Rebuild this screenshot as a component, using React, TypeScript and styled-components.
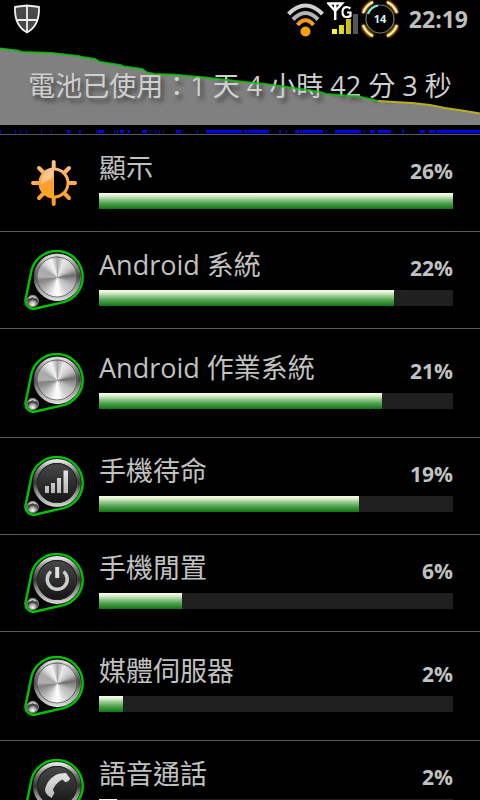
import React from "react";
import styled, { createGlobalStyle } from "styled-components";

const GlobalStyle = createGlobalStyle`
  html, body { margin: 0; background: #000; }
  body {
    color: #c1c1c1;
    font-family: "Open Sans", "Noto Sans CJK TC", sans-serif;
    overflow-x: hidden;
  }
`;

const Screen = styled.main`
  width: 100%;
  height: 100vh;
  overflow: hidden;
  background: #000;
`;

const StatusBar = styled.header`
  display: flex;
  align-items: center;
  justify-content: space-between;
  height: 38px;
  padding: 0 12px;
`;

const StatusGroup = styled.div`
  display: flex;
  align-items: center;
  gap: 2px;
`;

const Clock = styled.time`
  margin-left: 8px;
  font-size: 23px;
  line-height: 38px;
  font-weight: 700;
  color: #bebebe;
`;

const History = styled.section`
  position: relative;
  padding-bottom: 9px;
  border-bottom: 1px solid #5a5a5a;
`;

const Chart = styled.svg`
  display: block;
  width: 100%;
  height: 87px;
`;

const ChartLines = styled(Chart)`
  position: absolute;
  inset: 0 0 auto;
`;

const Activity = styled.svg`
  position: absolute;
  left: 0;
  bottom: 1px;
  width: 100%;
  height: 3px;
`;

const Duration = styled.h1`
  position: absolute;
  inset: 28px 0 auto;
  margin: 0;
  text-align: center;
  white-space: nowrap;
  font-size: 27px;
  line-height: 40px;
  font-weight: 400;
  color: #cfcfcf;
  text-shadow: 3px 4px 4px rgba(0, 0, 0, 0.5);
`;

const List = styled.ul`
  margin: 0;
  padding: 0;
  list-style: none;
`;

const Row = styled.li<{ $tall?: boolean }>`
  display: flex;
  align-items: center;
  gap: 15px;
  height: ${(p) => (p.$tall ? 108 : 96)}px;
  padding: 0 27px 0 24px;
  border-bottom: 1px solid #5a5a5a;
`;

const IconBox = styled.div`
  flex: none;
  width: 60px;
  height: 60px;
  svg { display: block; }
`;

const Details = styled.div`
  flex: 1;
  height: 64px;
`;

const Heading = styled.div`
  display: flex;
  justify-content: space-between;
  height: 42px;
`;

const Name = styled.span`
  font-size: 27px;
  line-height: 34px;
`;

const Percent = styled.span`
  font-size: 21px;
  line-height: 40px;
  font-weight: 700;
`;

const Track = styled.div`
  height: 16px;
  background: #202020;
`;

const Fill = styled.div`
  height: 100%;
  background: linear-gradient(#fbffe9 0%, #d9edc9 18%, #8cc489 42%, #4c9f4c 66%, #117611 100%);
`;

const BrushedFace = styled.div`
  width: 47px;
  height: 47px;
  border-radius: 50%;
  background: conic-gradient(
    #a8a8a8 0deg, #e8e8e8 20deg, #d8d8d8 38deg, #bbb 60deg, #6c6c6c 82deg, #8a8a8a 95deg,
    #bbb 120deg, #d0d0d0 150deg, #fff 178deg, #f2f2f2 195deg, #c4c4c4 220deg, #999 245deg,
    #808080 262deg, #b0b0b0 272deg, #a8a8a8 300deg, #e4e4e4 325deg, #f2f2f2 340deg, #a8a8a8 360deg
  );
`;

const GREEN_LINE =
  "0,48.5 17,50.5 22,52 52,53 60,54 78,56 82,57 95,59 100,62 120,65 124,66.5 142,69 147,72.5 155,74 175,74.7 205,77.5 240,81.5 265,84 290,87.5 320,92 326,94 345,95.5 357,96 378,101";
const YELLOW_LINE = "378,101 412,103 430,105 445,108 465,111 480,113.5";

const ACTIVE_SPANS = [
  [0, 1], [15, 1], [20, 1], [26, 1], [41, 1], [51, 1], [67, 3], [79, 2], [96, 1], [98, 6],
  [114, 1], [117, 1], [120, 4], [128, 2], [142, 5], [150, 1], [155, 1], [159, 1], [163, 1],
  [176, 5], [197, 1], [206, 36], [244, 3], [248, 21], [279, 2], [286, 1], [295, 4], [300, 2],
  [303, 20], [326, 1], [335, 26], [364, 1], [370, 5], [378, 13], [402, 2], [420, 5], [429, 6],
  [437, 43],
];

const Shield = () => (
  <svg width="30" height="32" viewBox="0 0 30 32" aria-label="Security">
    <path d="M15 2.5C11 3 6.5 3.5 3 4C2.5 15 5 24 15 29.5C25 24 27.5 15 27 4C23.5 3.5 19 3 15 2.5Z" fill="#484848" stroke="#eee" strokeWidth="1.8" />
    <path d="M15 3V29M4 17H26" stroke="#eee" strokeWidth="1.8" />
  </svg>
);

const Wifi = () => (
  <svg width="38" height="36" viewBox="0 0 38 36" fill="none" aria-label="Wi-Fi">
    <path d="M1.5 13Q18.500-4 35.5 13" stroke="#d0d0d0" strokeWidth="4" />
    <path d="M6 18.500Q18.500 5.500 31 18.500" stroke="#b4b4b4" strokeWidth="4" />
    <path d="M10.500 24Q18.500 14.500 26.500 24" stroke="#f49b18" strokeWidth="4" />
    <circle cx="18.500" cy="30.500" r="5" fill="#fba10d" />
  </svg>
);

const Signal = () => (
  <svg width="32" height="36" viewBox="0 0 32 36" aria-label="Signal">
    <defs>
      <linearGradient id="sig"><stop stopColor="#ff3" /><stop offset="1" stopColor="#c2b800" /></linearGradient>
    </defs>
    <path d="M1.500 2.500H15L8.200 10ZM8.200 3V19" fill="none" stroke="#fff" strokeWidth="2.500" />
    <path d="M23.500 7.500Q21.500 6 19.500 6Q15.500 6.500 15.500 11Q15.500 16 19.500 16Q22 16 23.500 15V11.500H20" fill="none" stroke="#fff" strokeWidth="2.200" />
    <path d="M5 28h5v5H5zM12 24h5v9h-5zM19 18h5v15h-5z" fill="url(#sig)" />
    <path d="M26 13h5v20h-5z" fill="#555" />
  </svg>
);

const Battery = () => (
  <svg width="38" height="38" viewBox="0 0 38 38" fill="none" aria-label="Battery 14">
    <defs>
      <filter id="glow" x="-30%" y="-30%" width="160%" height="160%"><feGaussianBlur stdDeviation="1.2" /></filter>
    </defs>
    <circle cx="19" cy="19" r="14" stroke="#777" strokeWidth="1.2" />
    <path d="M7 14A13.500 13.500 0 0 1 17 5.500" stroke="#7ee" strokeWidth="2" />
    <path d="M2 13Q5 5 12 2M26 2Q33 5 36 13M36 25Q33 33 26 36M12 36Q5 33 2 25" stroke="#f8a000" strokeWidth="4" filter="url(#glow)" />
    <path d="M2 13Q5 5 12 2M26 2Q33 5 36 13M36 25Q33 33 26 36M12 36Q5 33 2 25" stroke="#fff2ce" strokeWidth="2" />
    <text x="19" y="23" fill="#d8f6ff" fontSize="11" fontWeight="700" textAnchor="middle">14</text>
  </svg>
);

const Sun = () => (
  <svg width="60" height="60" viewBox="0 0 60 60" fill="none">
    <defs>
      <linearGradient id="sun" x1="0" y1="0" x2="0" y2="1">
        <stop stopColor="#ffc08a" /><stop offset=".5" stopColor="#ff9d35" /><stop offset="1" stopColor="#ffa820" />
      </linearGradient>
      <linearGradient id="ray" gradientUnits="userSpaceOnUse" x1="0" y1="7" x2="0" y2="53">
        <stop stopColor="#ffc08a" /><stop offset="1" stopColor="#ff9a18" />
      </linearGradient>
    </defs>
    <path d="M29.700 9V16M29.700 44V51M9 30H16M44 30H51M15 15L20 20M40 40L45 45M15 45L20 40M40 20L45 15" stroke="url(#ray)" strokeWidth="4" strokeLinecap="round" />
    <circle cx="30" cy="30" r="14" fill="#000" stroke="url(#ray)" strokeWidth="3" />
    <path d="M30 15A15 15 0 0 0 30 45Z" fill="url(#sun)" />
    <path d="M29 17A13 13 0 0 0 17 31Q22 29 29 24Z" fill="#ffd1a0" opacity=".7" />
  </svg>
);

type Kind = "sun" | "metal" | "bars" | "power" | "phone";

const Dial = ({ kind }: { kind: Kind }) => (
  <svg width="60" height="60" viewBox="0 0 60 60" fill="none">
    <defs>
      <linearGradient id="rim" x1="0" y1="0" x2="0" y2="1">
        <stop stopColor="#e4e4e4" /><stop offset=".25" stopColor="#777" /><stop offset=".5" stopColor="#343434" />
        <stop offset=".7" stopColor="#8a8a8a" /><stop offset="1" stopColor="#ccc" />
      </linearGradient>
      <linearGradient id="face" x1="0" y1="0" x2="0" y2="1">
        <stop stopColor="#484848" /><stop offset="1" stopColor="#151515" />
      </linearGradient>
      <linearGradient id="glyph" x1="0" y1="0" x2="0" y2="1">
        <stop stopColor="#e4e4e4" /><stop offset="1" stopColor="#b8b8b8" />
      </linearGradient>
      <radialGradient id="knob" cx=".5" cy=".8" r=".7">
        <stop stopColor="#fff" /><stop offset=".45" stopColor="#999" /><stop offset=".7" stopColor="#333" /><stop offset="1" stopColor="#999" />
      </radialGradient>
    </defs>
    <path d="M7.500 20.500A26 26 0 1 1 38.500 52.300L11.500 58.500A8 8 0 0 1 1.500 49.500Z" fill="#050505" stroke="#00c400" strokeWidth="2.400" />
    {kind === "metal" ? (
      <>
        <foreignObject x="9.500" y="3.500" width="47" height="47"><BrushedFace /></foreignObject>
        <circle cx="33" cy="27" r="22" stroke="url(#rim)" strokeWidth="3" strokeOpacity=".75" />
        <circle cx="33" cy="27" r="20" stroke="#4a4a4a" strokeOpacity=".8" strokeWidth="1" />
      </>
    ) : (
      <>
        <circle cx="33" cy="27" r="22" fill="#222" stroke="url(#rim)" strokeWidth="4" />
        <circle cx="33" cy="27" r="19.500" fill="url(#face)" stroke="#222" />
      </>
    )}
    {kind === "bars" && (
      <path d="M21 30h4v7h-4zM27 27h4v10h-4zM33 22h4v15h-4zM39.500 14.500h4.500V37h-4.500z" fill="url(#glyph)" />
    )}
    {kind === "power" && (
      <>
        <path d="M27 18.500A10 10 0 1 0 39.500 18.500" stroke="#ccc" strokeWidth="3.500" />
        <path d="M33.200 14V25" stroke="#e0e0e0" strokeWidth="4" />
      </>
    )}
    {kind === "phone" && (
      <path d="M42 14L46 19.500C46 21 43 23.500 41 23L38.500 20.500C34.500 22 30.500 26.500 29 31L30.500 34L27.500 39L24 36.500C21 34 20.500 31 21.500 28.500C24 21 30 15.500 36.500 14.500Z" fill="url(#glyph)" />
    )}
    <circle cx="8.700" cy="51" r="5.700" fill="url(#knob)" stroke="#888" />
    <path d="M5 48Q8.500 45 12 48" stroke="#ddd" strokeWidth="1" />
  </svg>
);

interface Usage { name: string; percent: number; fill: number; kind: Kind; tall?: boolean }

const USAGE: Usage[] = [
  { name: "顯示", percent: 26, fill: 100, kind: "sun" },
  { name: "Android 系統", percent: 22, fill: 83.3, kind: "metal" },
  { name: "Android 作業系統", percent: 21, fill: 80, kind: "metal", tall: true },
  { name: "手機待命", percent: 19, fill: 73.4, kind: "bars" },
  { name: "手機閒置", percent: 6, fill: 23.5, kind: "power" },
  { name: "媒體伺服器", percent: 2, fill: 6.8, kind: "metal", tall: true },
  { name: "語音通話", percent: 2, fill: 5.1, kind: "phone" },
];

export default function App() {
  return (
    <Screen lang="zh-Hant">
      <GlobalStyle />
      <StatusBar>
        <Shield />
        <StatusGroup>
          <Wifi />
          <Signal />
          <Battery />
          <Clock>22:19</Clock>
        </StatusGroup>
      </StatusBar>
      <History>
        <Chart viewBox="0 38 480 87" preserveAspectRatio="none">
          <polygon points={`${GREEN_LINE} ${YELLOW_LINE} 480,125 0,125`} fill="#808080" />
        </Chart>
        <Duration>電池已使用：1 天 4 小時 42 分 3 秒</Duration>
        <ChartLines viewBox="0 38 480 87" preserveAspectRatio="none" fill="none" strokeWidth="2">
          <polyline points={GREEN_LINE} stroke="#10c410" strokeOpacity=".85" />
          <polyline points={YELLOW_LINE} stroke="#b8b01a" />
        </ChartLines>
        <Activity viewBox="0 0 480 3" preserveAspectRatio="none">
          {ACTIVE_SPANS.map(([x, w]) => <rect key={x} x={x} width={w} height="3" fill="#00f" />)}
        </Activity>
      </History>
      <List>
        {USAGE.map((u) => (
          <Row key={u.name} $tall={u.tall}>
            <IconBox>{u.kind === "sun" ? <Sun /> : <Dial kind={u.kind} />}</IconBox>
            <Details>
              <Heading>
                <Name>{u.name}</Name>
                <Percent>{u.percent}%</Percent>
              </Heading>
              <Track role="progressbar" aria-label={u.name} aria-valuenow={u.percent}>
                <Fill style={{ width: `${u.fill}%` }} />
              </Track>
            </Details>
          </Row>
        ))}
      </List>
    </Screen>
  );
}
